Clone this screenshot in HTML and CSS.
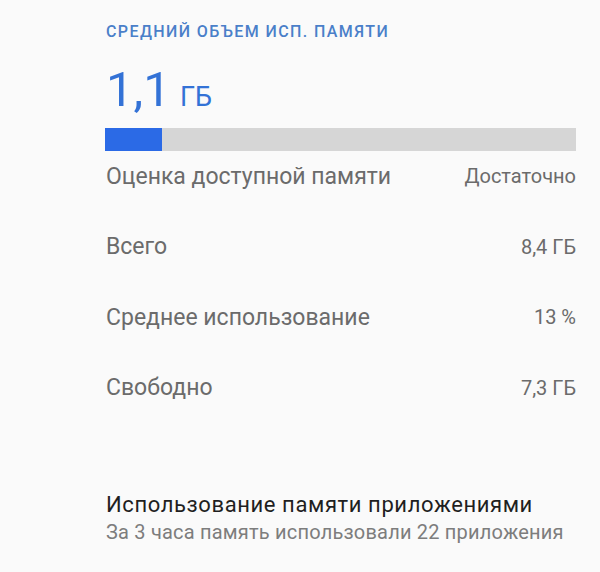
FILE: index.html
```html
<!DOCTYPE html>
<html lang="ru">
<head>
    <meta charset="UTF-8">
    <meta name="viewport" content="width=device-width, initial-scale=1.0">
    <title>Память</title>
    <link rel="stylesheet" href="styles.css">
</head>
<body>
    <main class="memory">
        <section class="summary">
            <h3 class="section-title">СРЕДНИЙ ОБЪЕМ ИСП. ПАМЯТИ</h3>
            <div class="big-value">1,1 <span class="unit">ГБ</span></div>
            <div class="bar">
                <div class="bar-fill" style="width: 12%"></div>
            </div>
        </section>

        <ul class="stats">
            <li class="stat-row"><span>Оценка доступной памяти</span><span class="stat-value">Достаточно</span></li>
            <li class="stat-row"><span>Всего</span><span class="stat-value">8,4 ГБ</span></li>
            <li class="stat-row"><span>Среднее использование</span><span class="stat-value">13 %</span></li>
            <li class="stat-row"><span>Свободно</span><span class="stat-value">7,3 ГБ</span></li>
        </ul>

        <a class="apps-link" href="#">
            <div class="apps-title">Использование памяти приложениями</div>
            <div class="apps-sub">За 3 часа память использовали 22 приложения</div>
        </a>
    </main>
</body>
</html>
```

FILE: styles.css
```css
body {
    font-family: Roboto, 'Noto Sans', sans-serif;
    background-color: #fafafa;
    margin: 0;
    padding: 0;
    color: #757575;
}
.memory {
    padding: 22px 24px 0 106px;
}
.section-title {
    margin: 0;
    font-size: 16px;
    line-height: 20px;
    font-weight: 500;
    letter-spacing: 1.4px;
    color: #4a7fc9;
}
.big-value {
    margin-top: 20px;
    font-size: 49px;
    line-height: 56px;
    word-spacing: -3px;
    color: #3372d6;
}
.unit {
    font-size: 27px;
    line-height: 1;
}
.bar {
    margin-top: 10px;
    height: 23px;
    background-color: #d6d6d6;
    margin-left: -1px;
}
.bar-fill {
    height: 100%;
    background-color: #2b6ae6;
}
.stats {
    list-style: none;
    margin: 0;
    padding: 0;
    display: flex;
    flex-direction: column;
    gap: 20.5px;
}
.stat-row {
    display: flex;
    justify-content: space-between;
    align-items: center;
    height: 50px;
    font-size: 23px;
    color: #6b6b6b;
}
.stat-value {
    font-size: 20px;
}
.apps-link {
    display: block;
    text-decoration: none;
    margin-top: 78px;
}
.apps-title {
    font-size: 22px;
    line-height: 28px;
    letter-spacing: 0.6px;
    color: #1f1f1f;
}
.apps-sub {
    font-size: 20px;
    line-height: 26px;
    letter-spacing: 0.2px;
    color: #7d7d7d;
}
```
